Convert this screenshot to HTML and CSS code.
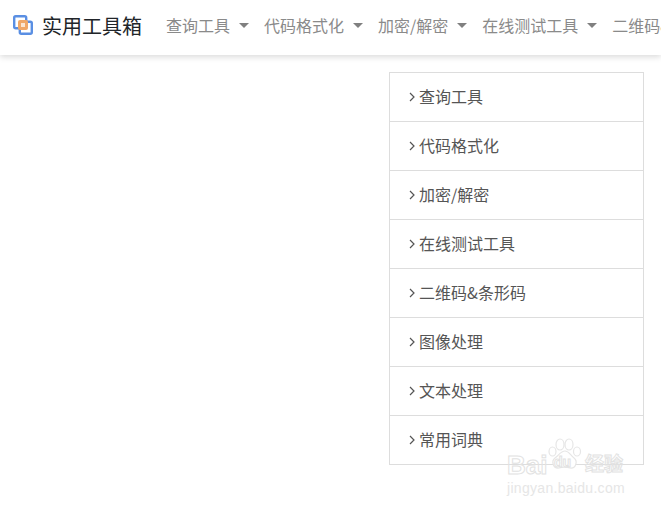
FILE: index.html
```html
<!DOCTYPE html>
<html>
<head>
  <meta charset="utf-8">
  <link rel="stylesheet" href="styles.css">
</head>
<body>
  <div class="navbar">
    <a href="#" class="brand">
      <svg class="brand-icon" width="20" height="20" viewBox="0 0 20 20">
        <rect x="1.2" y="1.2" width="12" height="12" rx="1.5" fill="none" stroke="#5a8fe3" stroke-width="2.4"/>
        <rect x="6.8" y="6.8" width="12" height="12" rx="1.5" fill="none" stroke="#5a8fe3" stroke-width="2.4"/>
        <rect x="5" y="5" width="10" height="10" rx="2" fill="#f0a868"/>
        <rect x="8" y="8" width="4" height="4" fill="#fbe6d2"/>
      </svg>
      <span class="brand-name">实用工具箱</span>
    </a>
    <div class="nav-links">
      <a href="#" class="nav-link">查询工具<span class="caret"></span></a>
      <a href="#" class="nav-link">代码格式化<span class="caret"></span></a>
      <a href="#" class="nav-link">加密/解密<span class="caret"></span></a>
      <a href="#" class="nav-link">在线测试工具<span class="caret"></span></a>
      <a href="#" class="nav-link">二维码&amp;条形码<span class="caret"></span></a>
    </div>
  </div>

  <div class="content">
    <div class="list-group">
      <a href="#" class="list-item"><svg class="chevron" width="6" height="10" viewBox="0 0 6 10"><path d="M1 1l4 4-4 4" fill="none" stroke="#555" stroke-width="1.2"/></svg>查询工具</a>
      <a href="#" class="list-item"><svg class="chevron" width="6" height="10" viewBox="0 0 6 10"><path d="M1 1l4 4-4 4" fill="none" stroke="#555" stroke-width="1.2"/></svg>代码格式化</a>
      <a href="#" class="list-item"><svg class="chevron" width="6" height="10" viewBox="0 0 6 10"><path d="M1 1l4 4-4 4" fill="none" stroke="#555" stroke-width="1.2"/></svg>加密/解密</a>
      <a href="#" class="list-item"><svg class="chevron" width="6" height="10" viewBox="0 0 6 10"><path d="M1 1l4 4-4 4" fill="none" stroke="#555" stroke-width="1.2"/></svg>在线测试工具</a>
      <a href="#" class="list-item"><svg class="chevron" width="6" height="10" viewBox="0 0 6 10"><path d="M1 1l4 4-4 4" fill="none" stroke="#555" stroke-width="1.2"/></svg>二维码&amp;条形码</a>
      <a href="#" class="list-item"><svg class="chevron" width="6" height="10" viewBox="0 0 6 10"><path d="M1 1l4 4-4 4" fill="none" stroke="#555" stroke-width="1.2"/></svg>图像处理</a>
      <a href="#" class="list-item"><svg class="chevron" width="6" height="10" viewBox="0 0 6 10"><path d="M1 1l4 4-4 4" fill="none" stroke="#555" stroke-width="1.2"/></svg>文本处理</a>
      <a href="#" class="list-item"><svg class="chevron" width="6" height="10" viewBox="0 0 6 10"><path d="M1 1l4 4-4 4" fill="none" stroke="#555" stroke-width="1.2"/></svg>常用词典</a>
    </div>
  </div>

  <div class="watermark">
    <svg class="paw" width="36" height="32" viewBox="0 0 36 32">
      <g fill="#fff" stroke="#e6e6e6" stroke-width="1.2">
        <ellipse cx="13" cy="6.5" rx="4" ry="5.5"/>
        <ellipse cx="22" cy="6.5" rx="4" ry="5.5"/>
        <ellipse cx="5.5" cy="13.5" rx="3.5" ry="4.5"/>
        <ellipse cx="30" cy="13.5" rx="3.5" ry="4.5"/>
        <path d="M18 13c-4 0-6 4-10 7-4 3-2 11 4 10 3-1 8-1 11 0 6 1 8-7 4-10-4-3-5-7-9-7z"/>
      </g>
    </svg>
    <div class="wm-main">
      <span class="wm-bai">Bai</span>
      <span class="wm-du">du</span>
      <span class="wm-cn">经验</span>
    </div>
    <div class="wm-url">jingyan.baidu.com</div>
  </div>
</body>
</html>
```

FILE: styles.css
```css
html, body {
  height: 100%;
}

body {
  position: relative;
  margin: 0;
  overflow: hidden;
  background: #fff;
  font-family: "Noto Sans CJK SC", "Liberation Sans", sans-serif;
}

a {
  text-decoration: none;
}

.navbar {
  display: flex;
  align-items: center;
  height: 50px;
  padding: 0 0 5px 13px;
  background: #fff;
  box-shadow: 0 2px 6px rgba(0,0,0,0.15);
  white-space: nowrap;
}

.brand {
  display: flex;
  align-items: center;
  margin-right: 24px;
  color: #212529;
}

.brand-icon {
  margin-right: 9px;
}

.brand-name {
  font-size: 20px;
}

.nav-links {
  display: flex;
}

.nav-link {
  display: flex;
  align-items: center;
  margin-right: 15px;
  color: #8a8a8a;
  font-size: 16px;
}

.caret {
  width: 0;
  height: 0;
  margin-left: 9px;
  border-top: 5px solid #808080;
  border-left: 5px solid transparent;
  border-right: 5px solid transparent;
}

.content {
  display: flex;
  justify-content: flex-end;
  padding: 17px 17px 0 0;
}

.list-group {
  width: 255px;
  border: 1px solid #ddd;
  border-bottom: none;
  box-sizing: border-box;
}

.list-item {
  display: flex;
  align-items: center;
  height: 46px;
  padding: 0 0 2px 19px;
  border-bottom: 1px solid #ddd;
  color: #555;
  font-size: 16px;
}

.chevron {
  margin: 2px 4px 0 0;
}

.watermark {
  position: absolute;
  left: 507px;
  top: 437px;
  width: 120px;
  height: 56px;
}

.paw {
  position: absolute;
  left: 40px;
  top: 1px;
}

.wm-main {
  color: transparent;
  font-family: "Liberation Sans", "Noto Sans CJK SC", sans-serif;
  font-weight: bold;
  -webkit-text-stroke: 1px #e2e2e2;
}

.wm-bai {
  position: absolute;
  left: 0;
  top: 13px;
  font-size: 26px;
  line-height: 30px;
}

.wm-du {
  position: absolute;
  left: 47px;
  top: 17px;
  font-size: 14px;
  line-height: 16px;
}

.wm-cn {
  position: absolute;
  left: 78px;
  top: 15px;
  font-size: 19px;
  line-height: 26px;
}

.wm-url {
  position: absolute;
  left: 0;
  top: 43px;
  color: #e6e6e6;
  font-family: "Liberation Sans", sans-serif;
  font-size: 14px;
  line-height: 16px;
  letter-spacing: 0.3px;
  white-space: nowrap;
}
```
